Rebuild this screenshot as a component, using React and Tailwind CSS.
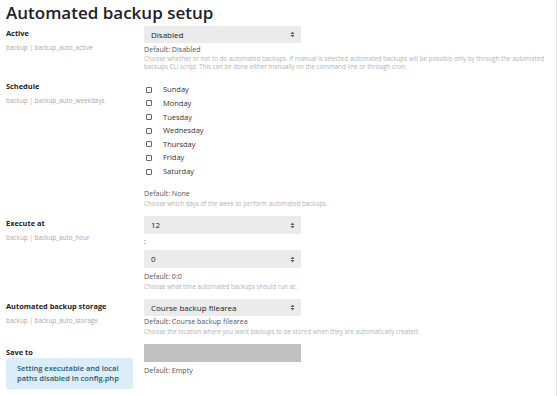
import React from "react";

const days = ["Sunday", "Monday", "Tuesday", "Wednesday", "Thursday", "Friday", "Saturday"];

export default function App() {
  return (
    <div className="w-[558px] h-[396px] bg-white overflow-hidden relative font-['Open_Sans',sans-serif] text-[#1d2125]">
      <div className="absolute right-[1px] top-0 bottom-0 w-px bg-[#e6e6e6]" />
      <h2 className="text-[17px] font-semibold leading-none pl-[6px] pt-[4px] h-[26px]">Automated backup setup</h2>

      <Row label="Active" name="backup | backup_auto_active">
        <Select value="Disabled" />
        <Default className="mt-[1.5px]">Default: Disabled</Default>
        <Desc className="mt-[1px]">
          Choose whether or not to do automated backups. If manual is selected automated backups will be possible only by through the automated backups CLI script. This can be done either manually on the command line or through cron.
        </Desc>
      </Row>

      <Row label="Schedule" name="backup | backup_auto_weekdays" className="mt-[8.5px]">
        <div className="flex flex-col mt-[4px]">
          {days.map((d) => (
            <label key={d} className="flex items-center h-[13.67px] text-[7.5px] text-[#333]">
              <span className="w-[6px] h-[6px] border border-[#666] rounded-[1px] ml-[2px] mr-[11px]" />
              {d}
            </label>
          ))}
        </div>
        <Default className="mt-[10.5px]">Default: None</Default>
        <Desc className="mt-[2px]">Choose which days of the week to perform automated backups.</Desc>
      </Row>

      <Row label="Execute at" name="backup | backup_auto_hour" className="mt-[8px]">
        <Select value="12" tall />
        <div className="text-[7px] leading-[16px] text-[#333]">:</div>
        <Select value="0" tall />
        <Default className="mt-[4px]">Default: 0:0</Default>
        <Desc className="mt-[2px]">Choose what time automated backups should run at.</Desc>
      </Row>

      <Row label="Automated backup storage" name="backup | backup_auto_storage" className="mt-[8px]">
        <Select value="Course backup filearea" />
        <Default className="mt-[1px]">Default: Course backup filearea</Default>
        <Desc className="mt-[2px]">Choose the location where you want backups to be stored when they are automatically created.</Desc>
      </Row>

      <div className="flex mt-[8px]">
        <div className="w-[138px] pl-[6px] shrink-0">
          <div className="text-[7.4px] font-bold leading-[10px] pt-[3px]">Save to</div>
          <div className="mt-[1px] w-[127px] h-[31px] bg-[#dbeef7] rounded-[2px] px-[11px] flex items-center text-[7.5px] font-semibold leading-[9.3px] text-[#1f5a7a]">
            Setting executable and local paths disabled in config.php
          </div>
        </div>
        <div className="pl-[6px]">
          <div className="w-[157px] h-[18px] bg-[#c0c0c0]" />
          <Default className="mt-[4px]">Default: Empty</Default>
        </div>
      </div>
    </div>
  );
}

function Row({ label, name, children, className = "" }) {
  return (
    <div className={`flex ${className}`}>
      <div className="w-[138px] pl-[6px] shrink-0">
        <div className="text-[7.4px] font-bold leading-[10px] pt-[2px]">{label}</div>
        <div className="text-[6.4px] text-[#a5a9ad] leading-[10px] mt-[5px]">{name}</div>
      </div>
      <div className="flex-1 pl-[6px] pr-[10px]">{children}</div>
    </div>
  );
}

function Select({ value, tall }) {
  return (
    <div
      className={`w-[157px] ${tall ? "h-[18px]" : "h-[17px]"} bg-[#ebebeb] rounded-[1px] flex items-center justify-between pl-[7px] pr-[6px] text-[8px] text-[#1d2125]`}
    >
      <span>{value}</span>
      <svg width="5" height="7" viewBox="0 0 5 7">
        <path d="M0.5 3 L2.5 0.8 L4.5 3 Z M0.5 4 L2.5 6.2 L4.5 4 Z" fill="#555" />
      </svg>
    </div>
  );
}

function Default({ children, className = "" }) {
  return <div className={`text-[7.1px] text-[#555] leading-[9px] ${className}`}>{children}</div>;
}

function Desc({ children, className = "" }) {
  return <div className={`text-[6.2px] text-[#b0b3b6] leading-[8px] ${className}`}>{children}</div>;
}
